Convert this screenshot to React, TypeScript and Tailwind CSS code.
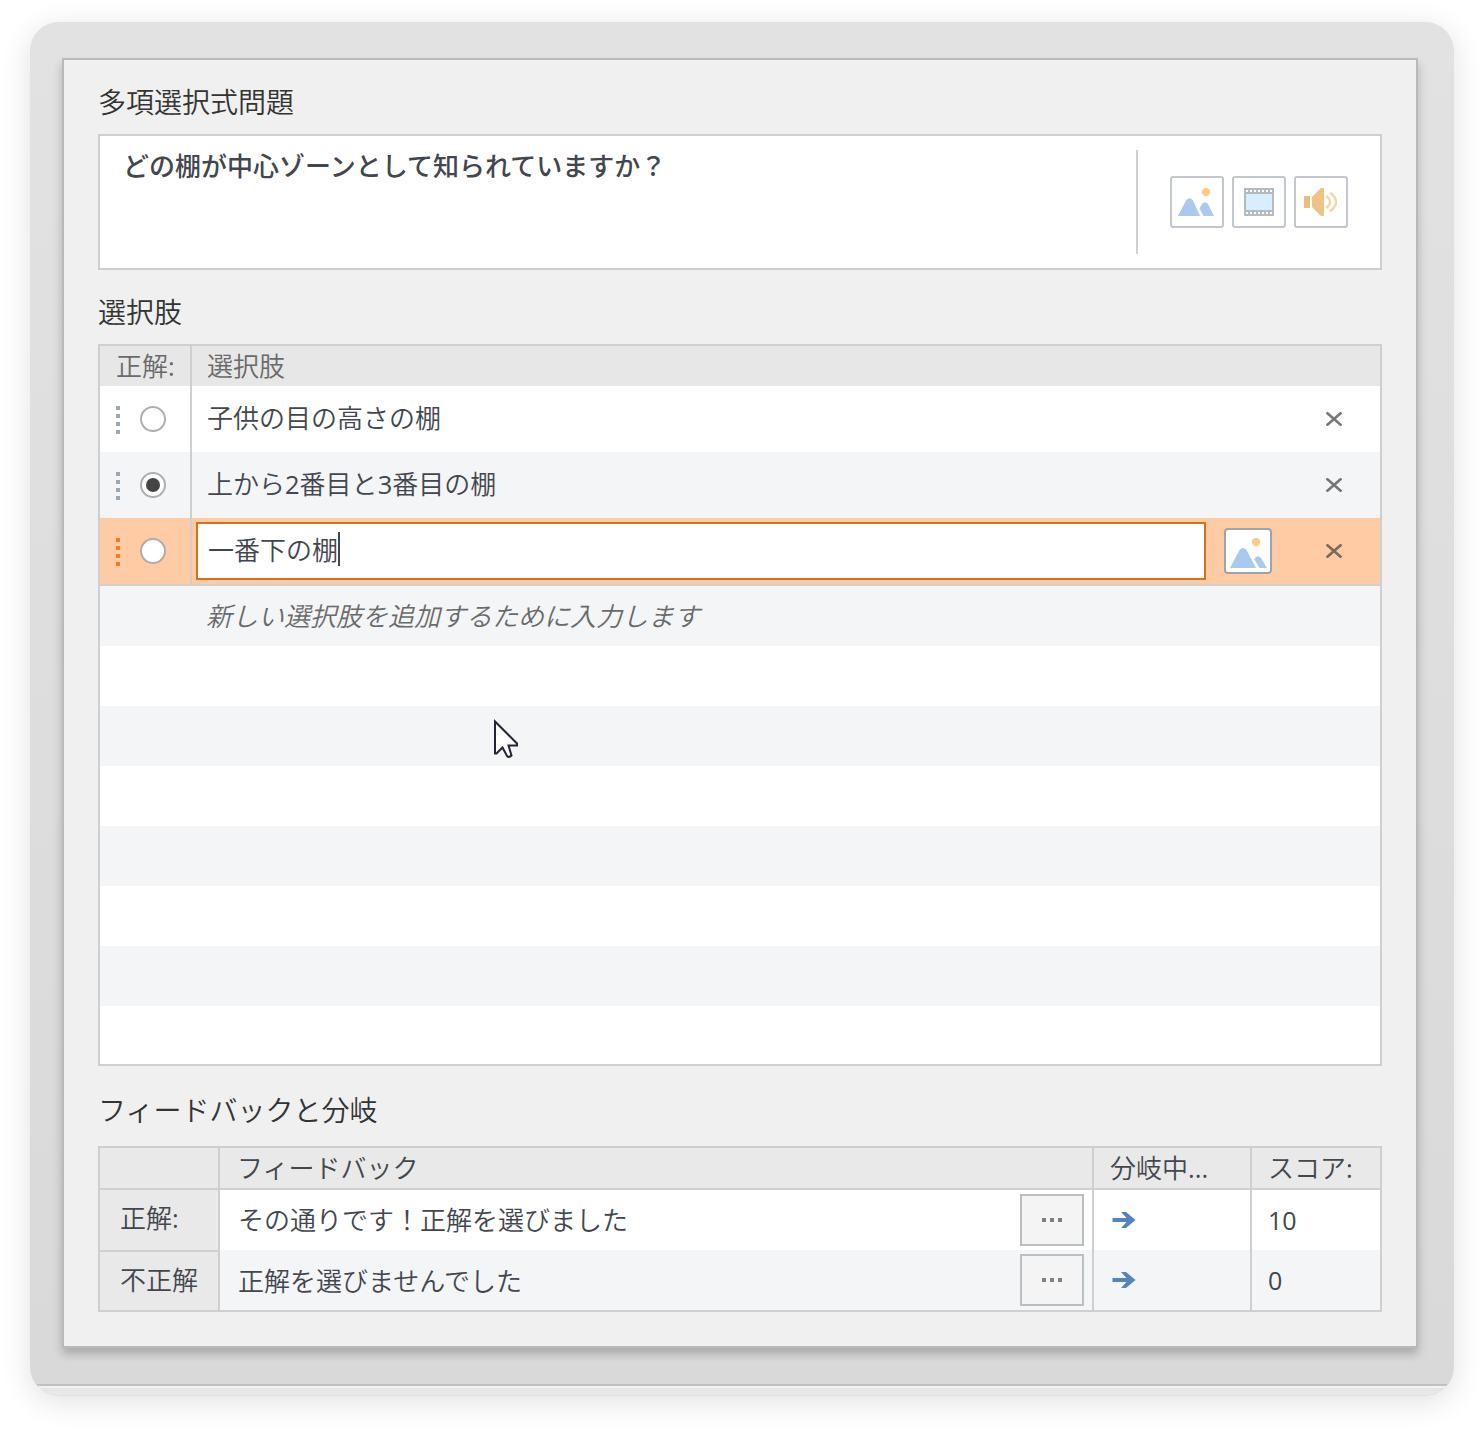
import React, { useState } from 'react';

const initialChoices = [
  { id: 1, text: '子供の目の高さの棚' },
  { id: 2, text: '上から2番目と3番目の棚' },
  { id: 3, text: '一番下の棚' }
];

const feedbackRows = [
  { label: '正解:', text: 'その通りです！正解を選びました', score: '10' },
  { label: '不正解', text: '正解を選びませんでした', score: '0' }
];

// Digits and Latin punctuation need a heavier cut to sit evenly beside the kanji
function Mixed({ text }: { text: string }) {
  return (
    <span>
      {text.split(/([0-9.:]+)/).map((part, i) =>
        i % 2 ? (
          <span key={i} className="text-[25.5px] font-normal">
            {part}
          </span>
        ) : (
          part
        )
      )}
    </span>
  );
}

function PictureIcon() {
  return (
    <svg width="36" height="28" viewBox="0 0 36 28">
      <circle cx="28" cy="4" r="4.2" fill="#fdcb82" />
      <path d="M0 28 L8 12.5 Q11.5 8 15 12.5 L22 28 Z" fill="#a9caee" />
      <path d="M21.500 20.500 L24 16 Q27 12.500 30 16 L36 28 H25.500 Z" fill="#a9caee" />
    </svg>
  );
}

function SmallPictureIcon() {
  return (
    <svg width="38" height="30" viewBox="0 0 38 30">
      <circle cx="27" cy="4" r="4.200" fill="#fdcb82" />
      <path d="M1 30 L10.5 12 Q14 8 17.5 12 L27 30 Z" fill="#a9caee" />
      <path d="M25 21 Q28.500 16 32 20 L38 30 H30.500 Z" fill="#a9caee" />
    </svg>
  );
}

function FilmIcon() {
  const holes = [2, 6, 10, 14, 18, 22, 26];
  return (
    <svg width="30" height="28" viewBox="0 0 30 28" shapeRendering="crispEdges">
      <rect width="30" height="28" fill="#b5babd" />
      <rect x="2" y="6" width="26" height="16" fill="#d7eeff" />
      {holes.map((x) => (
        <g key={x} fill="#ffffff">
          <rect x={x} y="2" width="2" height="2" />
          <rect x={x} y="24" width="2" height="2" />
        </g>
      ))}
    </svg>
  );
}

function SpeakerIcon() {
  return (
    <svg width="36" height="28" viewBox="0 0 36 28">
      <rect x="1" y="8" width="6" height="12" fill="#e9bd7a" />
      <path d="M9 9 L18 0 H21 V28 H18 L9 19 Z" fill="#eec385" />
      <path d="M23.500 8 Q30.500 14 23.500 20" fill="none" stroke="#f2d6a8" strokeWidth="2.400" />
      <path d="M27 4.500 Q39 14 27 23.500" fill="none" stroke="#f2d6a8" strokeWidth="2.400" />
    </svg>
  );
}

function Grip({ active }: { active: boolean }) {
  return (
    <div className="mt-0.5 flex w-1 flex-col gap-1">
      {[0, 1, 2, 3].map((i) => (
        <span key={i} className={active ? 'h-1 w-1 bg-[#ea8130]' : 'h-1 w-1 bg-[#9ba9b6]'} />
      ))}
    </div>
  );
}

function Radio({ checked, onClick }: { checked: boolean; onClick: () => void }) {
  return (
    <button
      onClick={onClick}
      className="flex h-[26px] w-[26px] items-center justify-center rounded-full border-2 border-[#aeaeae] bg-white"
    >
      {checked && <span className="h-[14px] w-[14px] rounded-full bg-[#444444]" />}
    </button>
  );
}

function DeleteButton() {
  return (
    <button className="mr-[38px] flex h-4 w-4 items-center justify-center">
      <svg width="16" height="14" viewBox="0 0 16 14">
        <path d="M0.500 0.500 L15.500 13.500 M15.500 0.500 L0.500 13.500" stroke="#4a4a4a" strokeOpacity="0.75" strokeWidth="2.700" />
      </svg>
    </button>
  );
}

function ArrowIcon() {
  return (
    <svg width="24" height="16" viewBox="0 0 24 16">
      <path d="M0.500 8 H19" stroke="#5583bb" strokeWidth="4" />
      <path d="M9 0 H14 L23.500 8 L14 16 H9 L15.500 9 V7 Z" fill="#5583bb" />
    </svg>
  );
}

function Cursor() {
  return (
    <svg className="absolute left-[492px] top-[718px]" width="28" height="42" viewBox="0 0 28 42">
      <path
        d="M3 3.500 V35.500 H4.500 L10.500 29.500 L15 38 Q17 40 19.500 37.500 L16.500 27.500 H25 V25.500 Z"
        fill="#ffffff"
        stroke="#252436"
        strokeWidth="2"
      />
    </svg>
  );
}

export default function App() {
  const [correct, setCorrect] = useState(2);

  return (
    <div className="relative h-[1434px] w-[1484px] overflow-hidden bg-white px-[30px] pt-[22px] font-['Open_Sans','Noto_Sans_CJK_JP',sans-serif] text-[26px] leading-[34px] text-[#43464d]">
      <div className="h-[1374px] rounded-[29px] shadow-[0_6px_30px_rgba(0,0,0,0.12)]">
        <div className="h-full overflow-hidden rounded-[29px] border-b border-[#e0e0e0] bg-[#e9e9e9]">
          <div className="h-[1364px] border-b-2 border-[#c0c0c0] bg-linear-to-b from-[#e2e2e2] to-[#d9d9d9] pt-9 pr-9 pl-8">
            <div className="h-[1290px] border-2 border-[#b9b9b9] bg-[#f0f0f0] px-[34px] pt-6 shadow-[0_6px_9px_rgba(0,0,0,0.22)]">
              {/* Question */}
              <h2 className="h-[50px] text-[28px] leading-[36px] font-[350] text-[#333333]">多項選択式問題</h2>
              <div className="flex h-[136px] border-2 border-[#cfcfcf] bg-white">
                <div className="flex-1 pt-[13px] pl-[23px] font-medium">どの棚が中心ゾーンとして知られていますか？</div>
                <div className="mt-[14px] h-[104px] w-0.5 bg-[#cfcfcf]" />
                <div className="mt-10 mr-8 ml-8 flex gap-2">
                  <button className="flex h-[52px] w-[54px] items-center justify-center rounded-[3px] border-2 border-[#c1c7cd] pr-0.5">
                    <PictureIcon />
                  </button>
                  <button className="flex h-[52px] w-[54px] items-center justify-center rounded-[3px] border-2 border-[#c1c7cd]">
                    <FilmIcon />
                  </button>
                  <button className="flex h-[52px] w-[54px] items-center justify-center rounded-[3px] border-2 border-[#c1c7cd]">
                    <SpeakerIcon />
                  </button>
                </div>
              </div>

              {/* Choices */}
              <h2 className="mt-[24px] h-[50px] text-[28px] leading-[36px] font-[350] text-[#333333]">選択肢</h2>
              <div className="h-[722px] border-2 border-[#cfcfcf] bg-white font-[350]">
                <div className="flex h-10 items-center bg-[#e7e7e7] text-[#6a6a6a]">
                  <div className="flex h-full w-[92px] items-center border-r-2 border-[#cfcfcf] pl-4">
                    <Mixed text="正解:" />
                  </div>
                  <div className="pl-[15px]">選択肢</div>
                </div>
                {initialChoices.map((choice, idx) => {
                  const editing = choice.id === 3;
                  return (
                    <div
                      key={choice.id}
                      className={`flex h-[66px] items-center ${editing ? 'bg-[#ffcba5]' : idx % 2 ? 'bg-[#f3f5f7]' : 'bg-white'}`}
                    >
                      <div className="flex h-full w-[92px] items-center gap-5 border-r-2 border-[#cfcfcf] pl-4">
                        <Grip active={editing} />
                        <Radio checked={correct === choice.id} onClick={() => setCorrect(choice.id)} />
                      </div>
                      {editing ? (
                        <>
                          <div className="ml-1 flex h-[58px] w-[1010px] items-center border-2 border-[#d9701c] bg-white pl-[10px]">
                            <span className="-mt-0.5">{choice.text}</span>
                            <span className="-mt-1 h-[34px] w-0.5 bg-[#43464d]" />
                          </div>
                          <button className="ml-[18px] flex h-[46px] w-12 items-end justify-center rounded-[4px] border-2 border-[#9ba5ae] bg-white pb-1">
                            <SmallPictureIcon />
                          </button>
                        </>
                      ) : (
                        <div className="-mt-0.5 pl-[15px]">
                          <Mixed text={choice.text} />
                        </div>
                      )}
                      <div className="ml-auto">
                        <DeleteButton />
                      </div>
                    </div>
                  );
                })}
                <div className="flex h-[62px] items-center border-t-2 border-[#cfcfcf] bg-[#f3f5f7] pl-[106px] text-[#6a6a6a] italic">
                  新しい選択肢を追加するために入力します
                </div>
                {[0, 1, 2, 3, 4, 5].map((i) => (
                  <div key={i} className={i % 2 ? 'h-[60px] bg-[#f3f5f7]' : 'h-[60px] bg-white'} />
                ))}
                <div className="h-[58px] bg-white" />
              </div>

              {/* Feedback and branching */}
              <h2 className="mt-[26px] h-[54px] text-[28px] leading-[36px] font-[350] text-[#333333]">
                フィードバックと分岐
              </h2>
              <div className="h-[166px] border-2 border-[#cfcfcf] font-[350]">
                <div className="flex h-[42px] border-b-2 border-[#cfcfcf] bg-[#e9e9e9]">
                  <div className="w-[120px] border-r-2 border-[#cfcfcf]" />
                  <div className="flex w-[874px] items-center border-r-2 border-[#cfcfcf] pl-[17px]">フィードバック</div>
                  <div className="flex w-[158px] items-center border-r-2 border-[#cfcfcf] pl-4">
                    <Mixed text="分岐中..." />
                  </div>
                  <div className="flex items-center pl-4">
                    <Mixed text="スコア:" />
                  </div>
                </div>
                {feedbackRows.map((row, idx) => (
                  <div key={row.label} className={idx ? 'flex h-[60px] bg-[#f3f5f7]' : 'flex h-[60px] bg-white'}>
                    <div
                      className={`flex w-[120px] items-center border-r-2 border-[#cfcfcf] bg-[#e9e9e9] pl-5 ${idx ? 'border-t-2 pb-0.5' : 'pb-1'}`}
                    >
                      <Mixed text={row.label} />
                    </div>
                    <div className="flex w-[874px] items-center justify-between border-r-2 border-[#cfcfcf] pr-2 pl-[18px]">
                      <span className={idx ? 'mt-0.5' : ''}>{row.text}</span>
                      <button className="flex h-[52px] w-16 items-center justify-center gap-1 border-2 border-[#b9bfc0] bg-[#f4f4f4]">
                        <span className="h-1 w-1 bg-[#808080]" />
                        <span className="h-1 w-1 bg-[#808080]" />
                        <span className="h-1 w-1 bg-[#808080]" />
                      </button>
                    </div>
                    <div className="flex w-[158px] items-center border-r-2 border-[#cfcfcf] pl-[18px]">
                      <ArrowIcon />
                    </div>
                    <div className="flex items-center pl-4 text-[25px] font-normal">{row.score}</div>
                  </div>
                ))}
              </div>
            </div>
          </div>
          <div className="h-0.5 bg-[#f2f2f2]" />
          <div className="h-2 bg-linear-to-b from-[#e5e5e5] to-[#ebebeb]" />
        </div>
      </div>
      <Cursor />
    </div>
  );
}
